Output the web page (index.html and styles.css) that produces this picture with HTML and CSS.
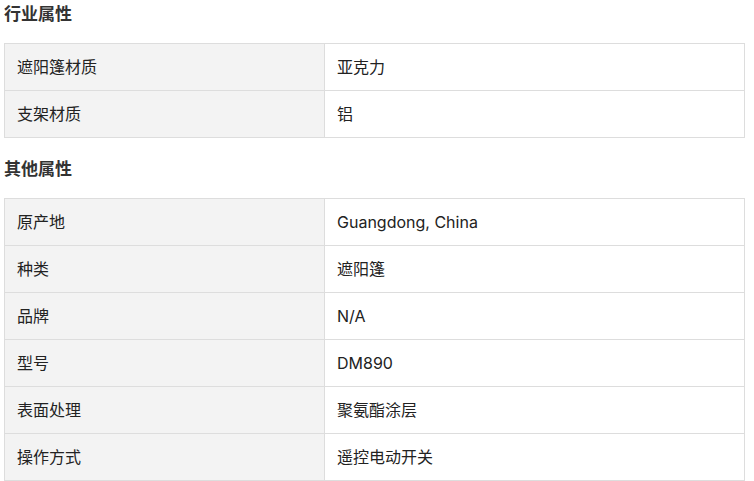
FILE: index.html
```html
<!DOCTYPE html>
<html lang="zh">
<head>
<meta charset="utf-8">
<link rel="stylesheet" href="styles.css">
</head>
<body>
<div class="wrap">
  <h3 class="title">行业属性</h3>
  <table class="attrs">
    <tr><td class="k">遮阳篷材质</td><td class="v">亚克力</td></tr>
    <tr><td class="k">支架材质</td><td class="v">铝</td></tr>
  </table>
  <h3 class="title second">其他属性</h3>
  <table class="attrs">
    <tr><td class="k">原产地</td><td class="v">Guangdong, China</td></tr>
    <tr><td class="k">种类</td><td class="v">遮阳篷</td></tr>
    <tr><td class="k">品牌</td><td class="v">N/A</td></tr>
    <tr><td class="k">型号</td><td class="v">DM890</td></tr>
    <tr><td class="k">表面处理</td><td class="v">聚氨酯涂层</td></tr>
    <tr><td class="k">操作方式</td><td class="v">遥控电动开关</td></tr>
  </table>
</div>
</body>
</html>
```
FILE: styles.css
```css
html, body {
  margin: 0;
  padding: 0;
  background: #fff;
}
body {
  font-family: Inter, "Noto Sans CJK SC", sans-serif;
  color: #222;
}
.wrap {
  padding-left: 4px;
  width: 741px;
}
.title {
  margin: 0 0 15px;
  font-size: 17px;
  line-height: 28px;
  font-weight: 700;
  color: #333;
}
.title.second {
  margin-top: 17px;
}
.attrs {
  width: 741px;
  border-collapse: collapse;
  table-layout: fixed;
}
.attrs td {
  border: 1px solid #dddddd;
  padding: 12px 12px;
  font-size: 16px;
  line-height: 22px;
  height: 22px;
}
.attrs .k {
  width: 295px;
  background: #f3f3f3;
}
.attrs .v {
  background: #fff;
}
```
